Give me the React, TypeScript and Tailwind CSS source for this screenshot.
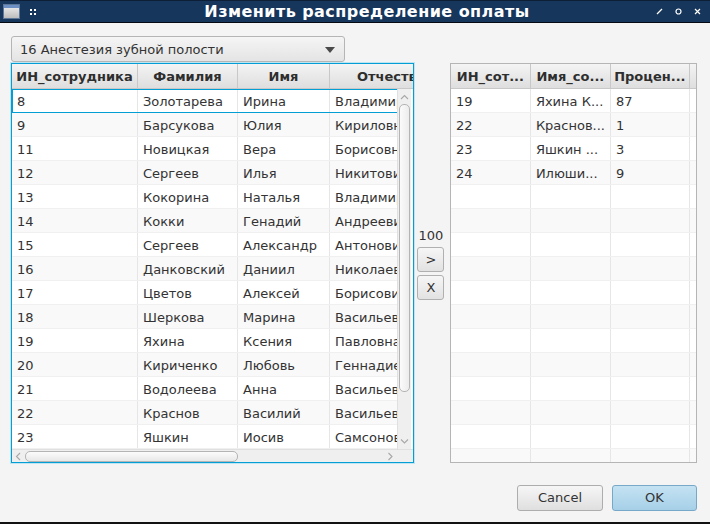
import React from 'react';

const rows = [
  ['8', 'Золотарева', 'Ирина', 'Владимировна'],
  ['9', 'Барсукова', 'Юлия', 'Кириловна'],
  ['11', 'Новицкая', 'Вера', 'Борисовна'],
  ['12', 'Сергеев', 'Илья', 'Никитович'],
  ['13', 'Кокорина', 'Наталья', 'Владимировна'],
  ['14', 'Кокки', 'Генадий', 'Андреевич'],
  ['15', 'Сергеев', 'Александр', 'Антонович'],
  ['16', 'Данковский', 'Даниил', 'Николаевич'],
  ['17', 'Цветов', 'Алексей', 'Борисович'],
  ['18', 'Шеркова', 'Марина', 'Васильевна'],
  ['19', 'Яхина', 'Ксения', 'Павловна'],
  ['20', 'Кириченко', 'Любовь', 'Геннадиевна'],
  ['21', 'Водолеева', 'Анна', 'Васильевна'],
  ['22', 'Краснов', 'Василий', 'Васильевич'],
  ['23', 'Яшкин', 'Иосив', 'Самсонович'],
];

const picked = [
  ['19', 'Яхина К...', '87'],
  ['22', 'Краснов...', '1'],
  ['23', 'Яшкин ...', '3'],
  ['24', 'Илюши...', '9'],
];

const leftCols = ['w-[126px]', 'w-[100px]', 'w-[92px]', 'w-[120px]'];
const rightCols = ['w-[80px]', 'w-[80px]', 'w-[79px]'];

// заголовок колонки в стиле Modena
function HeadCell({ w, label, align = 'center' }: { w: string; label: string; align?: 'center' | 'left' }) {
  return (
    <div
      className={`${w} shrink-0 h-full border-r border-[#c8c8c8] bg-gradient-to-b from-[#f4f4f4] to-[#dedede] font-bold text-[#2e2e2e] whitespace-nowrap overflow-hidden flex items-center pt-[1px] ${align === 'center' ? 'justify-center' : 'pl-[27px]'}`}
    >
      {label}
    </div>
  );
}

function Chevron({ dir }: { dir: 'up' | 'down' | 'left' | 'right' }) {
  const d = {
    up: 'M1 5 L4.5 1.5 L8 5',
    down: 'M1 1.5 L4.5 5 L8 1.5',
    left: 'M5 1 L1.5 4.5 L5 8',
    right: 'M1.5 1 L5 4.5 L1.5 8',
  }[dir];
  const vert = dir === 'up' || dir === 'down';
  return (
    <svg width={vert ? 9 : 7} height={vert ? 7 : 9} viewBox={vert ? '0 0 9 7' : '0 0 7 9'}>
      <path d={d} fill="none" stroke="#a8a8a8" strokeWidth="1.1" />
    </svg>
  );
}

function LeftTable() {
  return (
    <div className="w-[403px] h-[400px] border border-[#039ed3] shadow-[0_0_0_1px_#bfe4f2] flex flex-col bg-white">
      {/* Header */}
      <div className="h-[25px] flex border-b border-[#c8c8c8] overflow-hidden shrink-0">
        <HeadCell w={leftCols[0]} label="ИН_сотрудника" />
        <HeadCell w={leftCols[1]} label="Фамилия" />
        <HeadCell w={leftCols[2]} label="Имя" />
        <HeadCell w={leftCols[3]} label="Отчество" align="left" />
      </div>

      {/* Body + vertical scrollbar */}
      <div className="h-[360px] flex shrink-0">
        <div className="w-[385px] overflow-hidden">
          {rows.map((r, i) => (
            <div
              key={r[0]}
              className={`h-[24px] flex w-max ${i % 2 ? 'bg-[#f9f9f9]' : 'bg-white'} ${i === 0 ? 'outline outline-1 -outline-offset-1 outline-[#039ed3]' : ''} border-b border-[#f0f0f0]`}
            >
              {r.map((c, j) => (
                <div
                  key={j}
                  className={`${leftCols[j]} shrink-0 pl-[5px] pt-[2px] border-r border-[#e6e6e6] whitespace-nowrap overflow-hidden flex items-center`}
                >
                  {c}
                </div>
              ))}
            </div>
          ))}
        </div>
        <div className="w-[14px] bg-[#efefef] border-l border-[#e0e0e0] flex flex-col items-center">
          <div className="h-[15px] flex items-center justify-center pt-[2px]">
            <Chevron dir="up" />
          </div>
          <div className="w-[11px] h-[288px] rounded-[5px] border border-[#b4b4b4] bg-gradient-to-r from-[#fbfbfb] to-[#ececec]" />
          <div className="flex-1" />
          <div className="h-[16px] flex items-center justify-center">
            <Chevron dir="down" />
          </div>
        </div>
      </div>

      {/* Horizontal scrollbar */}
      <div className="flex-1 flex border-t border-[#e0e0e0] bg-[#efefef]">
        <div className="w-[385px] flex items-center">
          <div className="w-[13px] flex justify-center">
            <Chevron dir="left" />
          </div>
          <div className="w-[213px] h-[11px] rounded-[5px] border border-[#b4b4b4] bg-gradient-to-b from-[#fbfbfb] to-[#e8e8e8]" />
          <div className="flex-1" />
          <div className="w-[13px] flex justify-center">
            <Chevron dir="right" />
          </div>
        </div>
        <div className="flex-1" />
      </div>
    </div>
  );
}

function RightTable() {
  const empty = Array.from({ length: 12 });
  return (
    <div className="w-[248px] h-[400px] border border-[#b5b5b5] flex flex-col bg-white overflow-hidden">
      <div className="h-[25px] flex border-b border-[#c8c8c8] shrink-0">
        <HeadCell w={rightCols[0]} label="ИН_сот..." />
        <HeadCell w={rightCols[1]} label="Имя_со..." />
        <HeadCell w={rightCols[2]} label="Процен..." />
        <div className="flex-1 bg-gradient-to-b from-[#f4f4f4] to-[#dedede]" />
      </div>
      <div className="flex-1 overflow-hidden">
        {[...picked, ...empty.map(() => ['', '', ''])].map((r, i) => (
          <div
            key={i}
            className={`h-[24px] flex ${i % 2 ? 'bg-[#f9f9f9]' : 'bg-white'} border-b border-[#f0f0f0]`}
          >
            {r.map((c, j) => (
              <div
                key={j}
                className={`${rightCols[j]} shrink-0 pl-[5px] pt-[2px] border-r border-[#e6e6e6] whitespace-nowrap overflow-hidden flex items-center`}
              >
                {c}
              </div>
            ))}
            <div className="flex-1" />
          </div>
        ))}
      </div>
    </div>
  );
}

function SmallButton({ label }: { label: string }) {
  return (
    <button className="w-[27px] h-[25px] rounded-[3px] border border-[#b0b0b0] bg-gradient-to-b from-[#f6f6f6] to-[#e2e2e2] flex items-center justify-center text-[#333]">
      {label}
    </button>
  );
}

export default function App() {
  return (
    <div className="w-[710px] h-[524px] bg-[#f4f4f4] flex flex-col font-['DejaVu_Sans','Liberation_Sans',sans-serif] text-[13px] text-[#333333] overflow-hidden">
      {/* Title bar */}
      <div className="h-[23px] shrink-0 bg-[#17365c] border-t border-[#0d1f36] border-b border-b-[#050a12] flex items-center relative">
        <div className="ml-[3px] w-[17px] h-[15px] border border-[#5d7799] bg-gradient-to-b from-[#f2f2f2] to-[#bdbdbd] flex flex-col">
          <div className="h-[3px] bg-[#6c8fc4]" />
        </div>
        <div className="ml-[10px] grid grid-cols-2 gap-[2px]">
          <div className="w-[2px] h-[2px] bg-white" />
          <div className="w-[2px] h-[2px] bg-white" />
          <div className="w-[2px] h-[2px] bg-white" />
          <div className="w-[2px] h-[2px] bg-white" />
        </div>
        <div className="flex-1 text-center text-white font-bold text-[16px] tracking-[0.45px] pl-[42px]">
          Изменить распределение оплаты
        </div>
        <div className="flex items-center gap-[12px] mr-[9px]">
          <svg width="7" height="7" viewBox="0 0 7 7">
            <path d="M1 6 L6 1" stroke="white" strokeWidth="1.2" />
          </svg>
          <svg width="7" height="7" viewBox="0 0 7 7">
            <circle cx="3.5" cy="3.5" r="2.5" fill="none" stroke="white" strokeWidth="1.2" />
          </svg>
          <svg width="7" height="7" viewBox="0 0 7 7">
            <path d="M1 1 L6 6 M6 1 L1 6" stroke="white" strokeWidth="1.2" />
          </svg>
        </div>
      </div>

      {/* Content */}
      <div className="flex-1 flex flex-col pl-[11px] pr-[13px] pt-[13px]">
        {/* ComboBox */}
        <div className="w-[334px] h-[26px] rounded-[3px] border border-[#b5b5b5] bg-gradient-to-b from-[#f5f5f5] to-[#e4e4e4] flex items-center pl-[8px] pr-[9px] pt-[1px]">
          <span className="flex-1">16 Анестезия зубной полости</span>
          <svg width="10" height="6" viewBox="0 0 10 6">
            <path d="M0 0 H10 L5 6 Z" fill="#4a4a4a" />
          </svg>
        </div>

        {/* Tables */}
        <div className="mt-[1px] flex">
          <LeftTable />
          <div className="w-[36px] flex flex-col items-center justify-center gap-[3px] pr-[2px]">
            <div className="leading-[16px] pt-[2px]">100</div>
            <SmallButton label=">" />
            <SmallButton label="X" />
          </div>
          <RightTable />
        </div>

        {/* Dialog buttons */}
        <div className="mt-[22px] flex justify-end gap-[9px]">
          <button className="w-[86px] h-[26px] rounded-[3px] border border-[#adadad] bg-gradient-to-b from-[#f6f6f6] to-[#dfdfdf] text-[#333]">
            Cancel
          </button>
          <button className="w-[85px] h-[26px] rounded-[3px] border border-[#78a8c8] bg-gradient-to-b from-[#c4e2f2] to-[#a6d0e8] text-[#333]">
            OK
          </button>
        </div>
      </div>
      <div className="h-[2px] bg-[#111] shrink-0" />
    </div>
  );
}
